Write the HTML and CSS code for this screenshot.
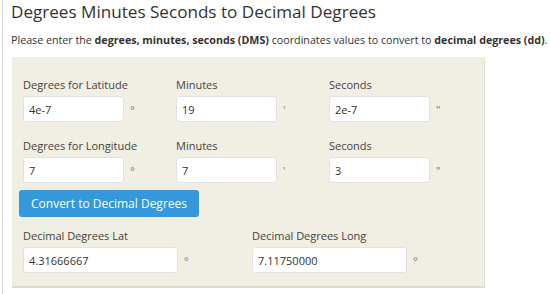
FILE: index.html
```html
<!DOCTYPE html>
<html lang="en">
  <head>
    <meta charset="UTF-8" />
    <title>Degrees Minutes Seconds to Decimal Degrees</title>
    <link rel="stylesheet" href="styles.css">
  </head>
  <body>
    <div class="page">
      <h1>Degrees Minutes Seconds to Decimal Degrees</h1>
      <p class="intro">Please enter the <b>degrees, minutes, seconds (DMS)</b> coordinates values to convert to <b>decimal degrees (dd)</b>.</p>

      <div class="panel">
        <div class="row three">
          <div class="field">
            <label>Degrees for Latitude</label>
            <div class="line"><input type="text" value="4e-7"><span class="unit">°</span></div>
          </div>
          <div class="field">
            <label>Minutes</label>
            <div class="line"><input type="text" value="19"><span class="unit">'</span></div>
          </div>
          <div class="field">
            <label>Seconds</label>
            <div class="line"><input type="text" value="2e-7"><span class="unit">"</span></div>
          </div>
        </div>

        <div class="row three">
          <div class="field">
            <label>Degrees for Longitude</label>
            <div class="line"><input type="text" value="7"><span class="unit">°</span></div>
          </div>
          <div class="field">
            <label>Minutes</label>
            <div class="line"><input type="text" value="7"><span class="unit">'</span></div>
          </div>
          <div class="field">
            <label>Seconds</label>
            <div class="line"><input type="text" value="3"><span class="unit">"</span></div>
          </div>
        </div>

        <button class="convert">Convert to Decimal Degrees</button>

        <div class="row two">
          <div class="field">
            <label>Decimal Degrees Lat</label>
            <div class="line"><input class="wide" type="text" value="4.31666667"><span class="unit">°</span></div>
          </div>
          <div class="field">
            <label>Decimal Degrees Long</label>
            <div class="line"><input class="wide" type="text" value="7.11750000"><span class="unit">°</span></div>
          </div>
        </div>
      </div>
    </div>
  </body>
</html>
```

FILE: styles.css
```css
body {
  margin: 0;
  font-family: "Open Sans", sans-serif;
  color: #333;
  background: #fff;
}

.page {
  margin-left: 2px;
  padding-left: 8px;
  border-left: 1px solid #d4d4d4;
  min-height: 294px;
  box-sizing: border-box;
}

h1 {
  margin: 0;
  padding-top: 0;
  font-size: 17.1px;
  font-weight: normal;
  line-height: 23px;
}

.intro {
  margin: 10px 0 0 0;
  font-size: 10.7px;
  line-height: 15px;
}

.intro b {
  font-weight: 700;
}

.panel {
  margin: 9px 0 0 1px;
  width: 473px;
  box-sizing: border-box;
  padding: 20px 0 13px 11px;
  background-color: #f1efe3;
  border-right: 1px solid #e4e1d2;
  border-bottom: 2px solid #dedbca;
}

.row {
  display: grid;
}

.row.three {
  grid-template-columns: 153px 153px 153px;
}

.row.two {
  grid-template-columns: 229px 229px;
}

.row + .row {
  margin-top: 16px;
}

.field label {
  display: block;
  font-size: 11px;
  line-height: 15px;
  color: #444;
  margin-bottom: 4px;
}

.line {
  display: flex;
  align-items: center;
}

.line input {
  width: 101px;
  height: 26px;
  box-sizing: border-box;
  padding: 0 5px;
  border: 1px solid #e2e2e2;
  border-radius: 3px;
  background: #fff;
  font-family: "Open Sans", sans-serif;
  font-size: 11px;
  color: #333;
}

.line input.wide {
  width: 155px;
}

.unit {
  margin-left: 6px;
  font-size: 11px;
  color: #777;
}

.convert {
  display: block;
  margin: 7px 0 11px -4px;
  width: 180px;
  height: 27px;
  padding: 0;
  border: none;
  border-radius: 3px;
  background-color: #3498db;
  color: #fff;
  font-family: "Open Sans", sans-serif;
  font-size: 12px;
}
```
